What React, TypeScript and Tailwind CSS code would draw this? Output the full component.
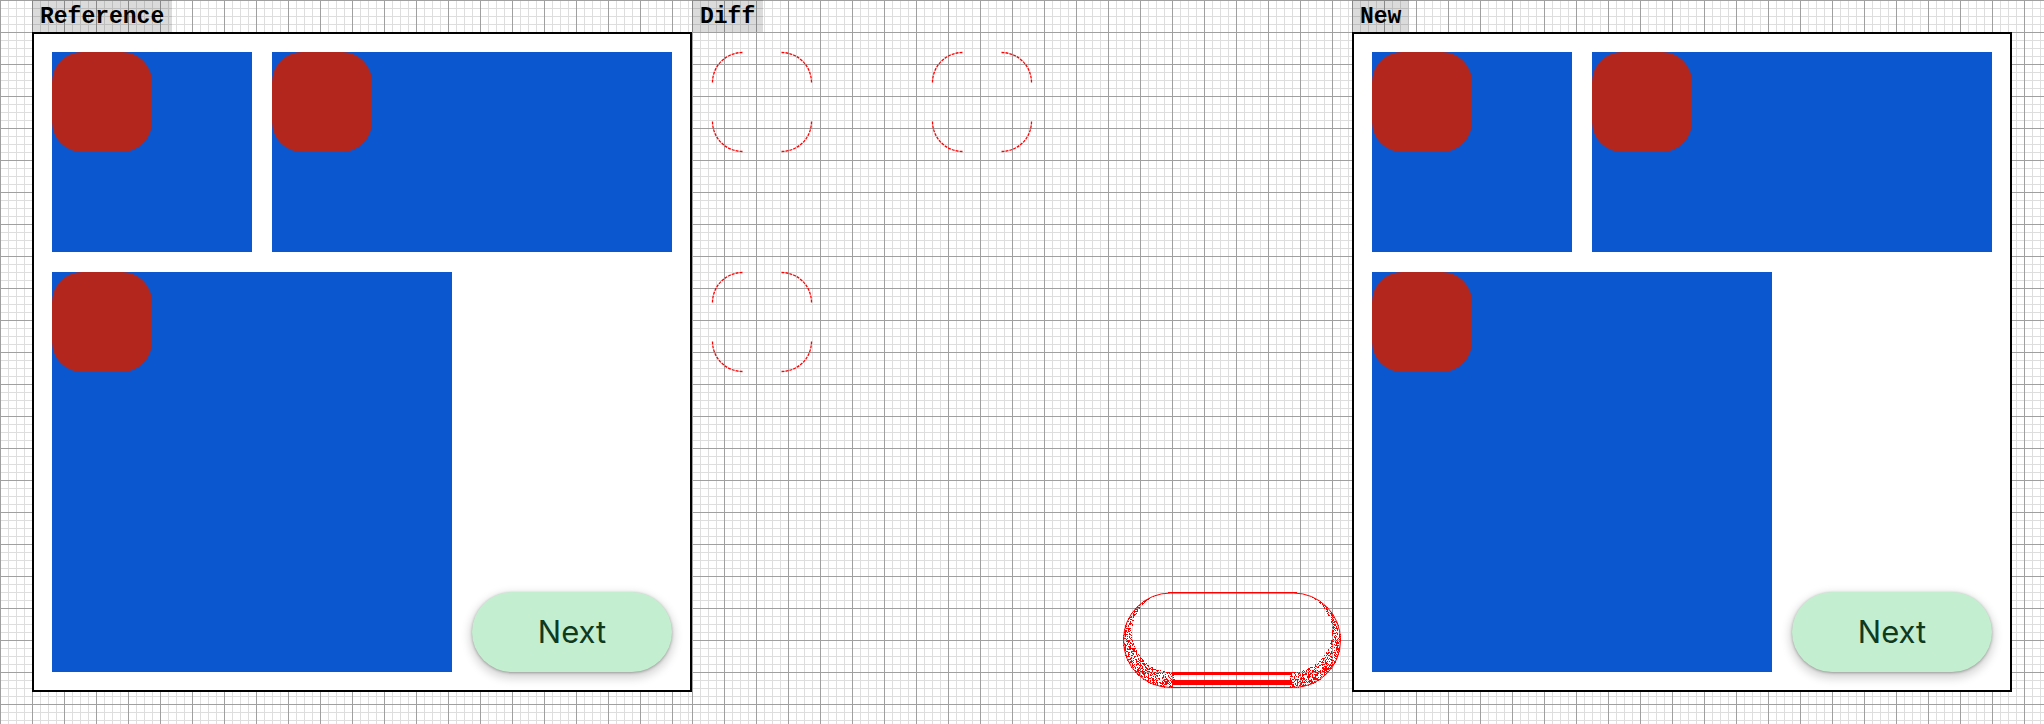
import React from 'react';

const GRID =
  '[background-image:linear-gradient(to_right,#a0a0a0_1px,transparent_1px),linear-gradient(to_bottom,#a0a0a0_1px,transparent_1px),linear-gradient(to_right,#dedede_1px,transparent_1px),linear-gradient(to_bottom,#dedede_1px,transparent_1px)] [background-size:32px_32px,32px_32px,8px_8px,8px_8px] bg-white';

// square positions inside a panel (outer box coords)
const squares = [
  { x: 20, y: 20 },
  { x: 240, y: 20 },
  { x: 20, y: 240 },
];

const inPill = (x: number, y: number, l: number, t: number, w: number, h: number) => {
  const r = h / 2;
  const cy = t + r;
  if (x >= l + r && x <= l + w - r) return y >= t && y <= t + h;
  const cx = x < l + r ? l + r : l + w - r;
  return (x - cx) ** 2 + (y - cy) ** 2 <= r * r;
};

// noisy band where the button shadow differs
const buildSpeckle = () => {
  let seed = 11;
  const rnd = () => {
    seed = (seed * 1103515245 + 12345) & 0x7fffffff;
    return seed / 0x7fffffff;
  };
  let d = '';
  for (let x = 431; x < 650; x++) {
    if (x > 482 && x < 598) continue;
    for (let y = 561; y < 657; y++) {
      const px = x + 0.5;
      const py = y + 0.5;
      if (!inPill(px, py, 431, 561, 218, 95)) continue;
      if (inPill(px, py, 440, 560, 200, 80)) continue;
      if (rnd() < 0.45) d += `M${x} ${y}h1v1h-1z`;
    }
  }
  return d;
};

const corners = (x: number, y: number) => {
  const r = 30;
  const s = 100;
  const a = x + 0.5;
  const b = y + 0.5;
  return [
    `M${a} ${b + r} A${r} ${r} 0 0 1 ${a + r} ${b}`,
    `M${a + s - r - 1} ${b} A${r} ${r} 0 0 1 ${a + s - 1} ${b + r}`,
    `M${a + s - 1} ${b + s - r - 1} A${r} ${r} 0 0 1 ${a + s - r - 1} ${b + s - 1}`,
    `M${a + r} ${b + s - 1} A${r} ${r} 0 0 1 ${a} ${b + s - r - 1}`,
  ];
};

function Label({ text }: { text: string }) {
  return (
    <div className="h-8 self-start px-2 pt-0.5 bg-black/[0.14] font-['Liberation_Mono',monospace] font-bold text-[23px] leading-[30px] text-black">
      {text}
    </div>
  );
}

function Tile({ w, h }: { w: string; h: string }) {
  return (
    <div className={`${w} ${h} bg-[#0b57d0] shrink-0`}>
      <div className="w-[100px] h-[100px] rounded-[30px] bg-[#b3261e]" />
    </div>
  );
}

function Screen() {
  return (
    <div className="w-[660px] h-[660px] border-2 border-black bg-white p-[18px] flex flex-col gap-5">
      <div className="flex gap-5">
        <Tile w="w-[200px]" h="h-[200px]" />
        <Tile w="w-[400px]" h="h-[200px]" />
      </div>
      <div className="flex gap-5">
        <Tile w="w-[400px]" h="h-[400px]" />
        <div className="w-[200px] h-[400px] flex items-end">
          <button
            type="button"
            className="w-[200px] h-20 rounded-full bg-[#c4eed0] text-[#0f3a1d] font-['Inter',sans-serif] text-[31px] shadow-[0_4px_8px_3px_rgba(0,0,0,0.15),0_1px_3px_rgba(0,0,0,0.3)]"
          >
            Next
          </button>
        </div>
      </div>
    </div>
  );
}

function DiffView() {
  const speckle = buildSpeckle();
  return (
    <svg width={660} height={660} viewBox="0 0 660 660" className="block">
      {squares.map((sq, i) =>
        corners(sq.x, sq.y).map((d, j) => (
          <path key={`${i}-${j}`} d={d} fill="none" stroke="#ff0000" strokeWidth={1.3} strokeDasharray="3 1" />
        ))
      )}
      <path d={speckle} fill="#ff0000" />
      <rect x={431.5} y={561} width={217} height={94.5} rx={47} fill="none" stroke="#ff0000" strokeWidth={1} />
      <line x1={476} y1={560.5} x2={605} y2={560.5} stroke="#ff0000" strokeWidth={1} />
      <rect x={480} y={640} width={120} height={3} fill="#ff0000" />
      <rect x={480} y={648} width={120} height={5} fill="#ff0000" />
    </svg>
  );
}

export default function App() {
  return (
    <div className={`${GRID} w-[2044px] h-[724px] flex pl-8 overflow-hidden`}>
      <div className={`${GRID} w-[660px] h-[724px] flex flex-col shrink-0`}>
        <Label text="Reference" />
        <Screen />
      </div>
      <div className={`${GRID} w-[660px] h-[724px] flex flex-col shrink-0`}>
        <Label text="Diff" />
        <DiffView />
      </div>
      <div className={`${GRID} w-[692px] h-[724px] flex flex-col shrink-0`}>
        <Label text="New" />
        <Screen />
      </div>
    </div>
  );
}
